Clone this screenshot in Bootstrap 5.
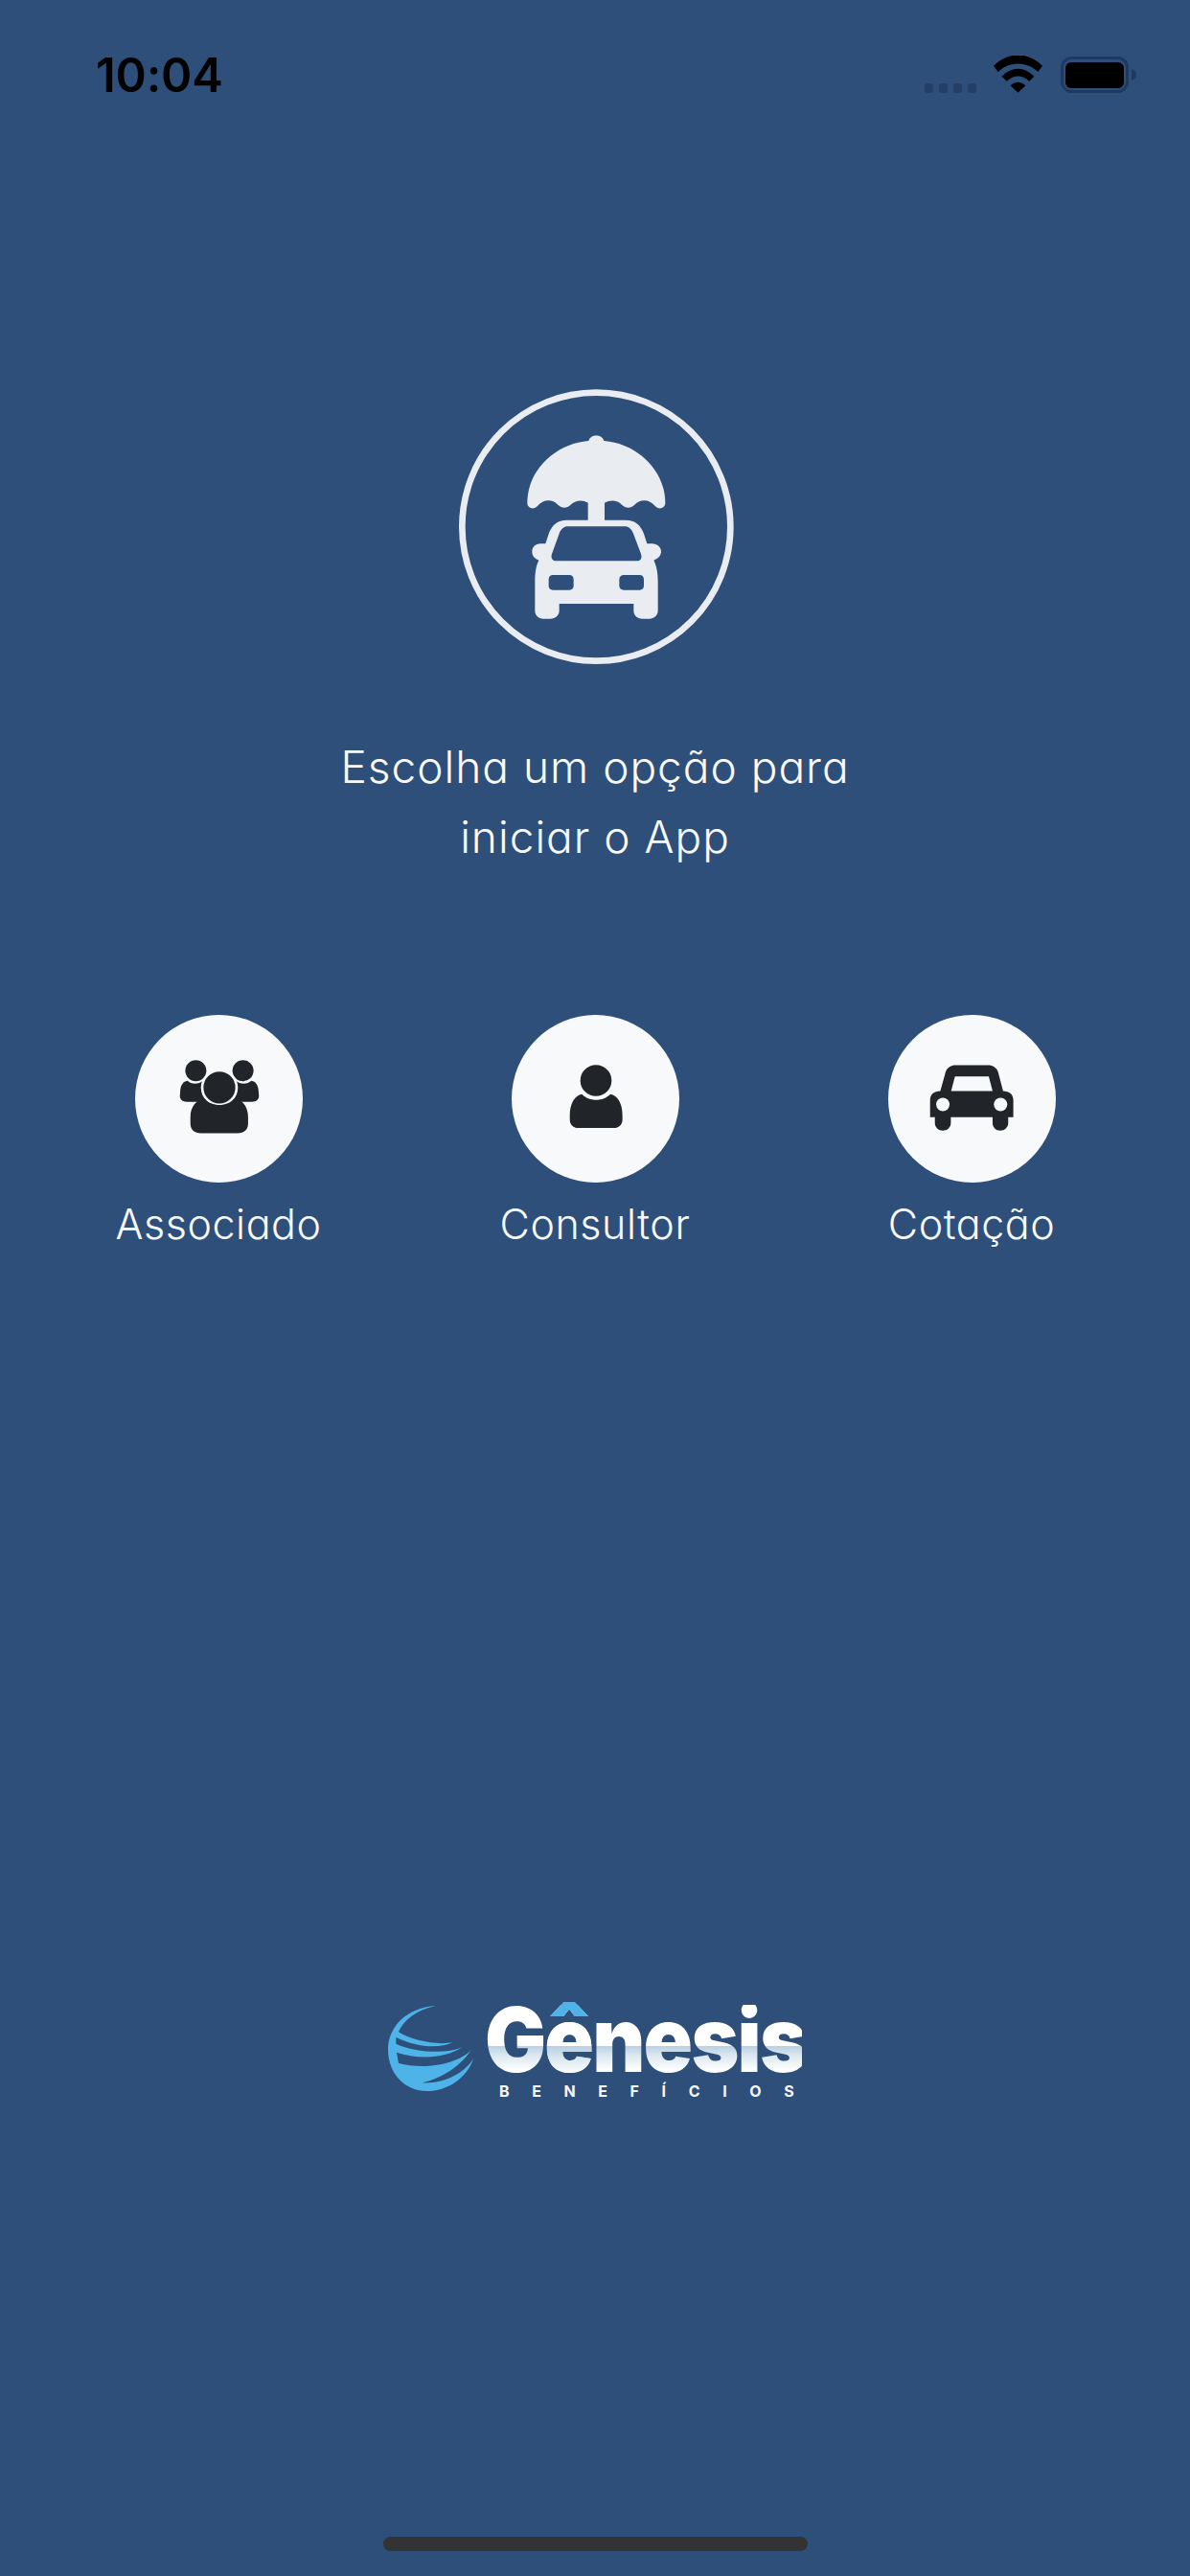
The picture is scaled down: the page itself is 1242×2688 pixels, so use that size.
<!DOCTYPE html>
<html lang="pt-BR">
<head>
<meta charset="utf-8">
<title>Gênesis Benefícios</title>
<link href="https://cdn.jsdelivr.net/npm/bootstrap@5.3.0/dist/css/bootstrap.min.css" rel="stylesheet">
<style>
html,body{height:2688px;overflow:hidden}
body{background:#2e4f7a;font-family:Inter,"Liberation Sans",sans-serif;color:#f8f9fa}
.screen{height:2688px}
.statusbar{height:132px;padding:0 56px 0 100px;padding-top:52px}
.clock{font-size:49px;font-weight:600;color:#000;line-height:54px;letter-spacing:-.2px;width:131px;white-space:nowrap}
.sig-dots{gap:6px;margin-top:35px;margin-right:18px}
.sig-dots i{display:block;width:9px;height:10px;border-radius:3px;background:#243f66}
.wifi-ico{display:block;width:51px;height:39px;margin-right:19px;margin-top:6px}
.batt-ico{display:block;width:79px;height:38px;margin-top:7px}
.hero-ico{display:block;width:320px;height:320px;margin-top:258px}
.intro{font-size:46px;font-weight:300;line-height:73px;letter-spacing:1px;margin-top:54px;margin-bottom:0;font-feature-settings:"cv11" 1;text-align:center}
.choices{padding:149px 31.5px 0}
.round-btn{display:block;width:175px;height:175px;border-radius:50%;background:#f8f9fa;border:0;padding:0}
.round-btn svg{display:block;width:175px;height:175px}
.choice-label{font-size:43px;font-weight:300;line-height:48px;margin-top:19px;letter-spacing:.55px;font-feature-settings:"cv11" 1;white-space:nowrap}
.brand{margin-top:791px;gap:10px;width:434px}
.globe{display:block;width:92px;height:96px;flex:none}
.brand-name{font-size:94px;font-weight:900;line-height:72px;height:72px;width:366px;letter-spacing:-2px;white-space:nowrap;background:linear-gradient(180deg,#fff 0,#fff 59%,#b9d0e2 60%,#d9e6ef 72%,#fff 95%);-webkit-background-clip:text;background-clip:text;color:transparent;transform:scaleX(.905);transform-origin:left center}
.brand-e{background:linear-gradient(180deg,#4db3e8 0,#4db3e8 32%,#fff 33%,#fff 56%,#b9d0e2 56.5%,#d9e6ef 67%,#fff 82%);-webkit-background-clip:text;background-clip:text}
.brand-sub{font-size:16px;font-weight:700;line-height:16px;letter-spacing:23.6px;color:#f4f7fa;padding-left:15px;margin-top:10px;white-space:nowrap}
.home-bar{width:443px;height:15px;border-radius:8px;background:#333;margin-top:auto;margin-bottom:26px}
</style>
</head>
<body>
<main class="screen d-flex flex-column align-items-center">
  <header class="statusbar w-100 d-flex justify-content-between align-items-start">
    <div class="clock">10:04</div>
    <div class="d-flex align-items-start">
      <div class="sig-dots d-flex"><i></i><i></i><i></i><i></i></div>
      <svg class="wifi-ico" viewBox="285 85 153 117"><path fill="#000" d="M285 117C330 72 393 72 438 117L424 136C388 102 335 102 299 136Z"/><path d="M311 150C341 118 382 118 412 150L397 165C373 144 350 144 326 165Z" fill="#000"/><path d="M338 179C352 165 371 165 385 179L361 201Z" fill="#000"/></svg>
      <svg class="batt-ico" viewBox="0 0 79 38"><rect x="1.5" y="1.5" width="68" height="35" rx="10" fill="none" stroke="#1f3a60" stroke-width="3"/><rect x="5" y="6" width="61" height="27" rx="6" fill="#000"/><path d="M74 13c3 1 5 3 5 6s-2 5-5 6z" fill="#1f3a60"/></svg>
    </div>
  </header>

  <svg class="hero-ico" viewBox="0 0 960 960" role="img" aria-label="Carro sob guarda-sol">
    <circle cx="484" cy="479" r="420" fill="none" stroke="#e9ecf1" stroke-width="20"/>
    <g fill="#e9ecf1">
      <path d="M460 210C466 188 502 188 508 210C610 218 700 300 700 405C700 420 680 428 668 414C650 392 622 392 604 410C592 422 576 422 564 410C550 396 530 394 510 404V460H458V404C440 394 420 396 404 410C392 422 376 422 364 410C346 392 318 392 300 414C288 428 268 420 268 405C268 300 358 218 460 210Z"/>
      <path fill-rule="evenodd" d="M392 458H576C606 458 622 474 632 498L643 532H658C676 532 687 544 687 556C687 570 678 578 664 584C672 600 677 620 677 650V742C677 756 665 767 650 767H628C612 767 601 756 601 742V720H368V742C368 756 356 767 340 767H318C303 767 292 756 292 742V650C292 620 296 600 304 584C290 578 283 570 283 556C283 544 292 532 310 532H325L336 498C346 474 362 458 392 458ZM396 478C382 478 374 486 368 500L345 564C341 576 346 586 358 586H612C624 586 628 576 624 564L600 500C594 486 586 478 572 478ZM348 630C340 630 335 636 335 644V664C335 672 340 677 348 677H400C408 677 413 672 413 664V644C413 636 408 630 400 630ZM570 630C562 630 556 636 556 644V664C556 672 562 677 570 677H620C628 677 633 672 633 664V644C633 636 628 630 620 630Z"/>
    </g>
  </svg>

  <p class="intro">Escolha um opção para<br>iniciar o App</p>

  <section class="choices w-100">
    <div class="row g-0">
      <div class="col-4 d-flex flex-column align-items-center">
        <button type="button" class="round-btn" aria-label="Associado">
          <svg viewBox="120 57 525 526">
            <g fill="#212529">
              <circle cx="310" cy="232" r="33"/><circle cx="458" cy="232" r="33"/>
              <path d="M261 298C262 278 270 266 284 264C296 276 320 276 334 262L345 330H282C268 330 260 322 260 312Z"/>
              <path d="M507 298C506 278 498 266 484 264C472 276 448 276 434 262L423 330H486C500 330 508 322 508 312Z"/>
              <circle cx="384" cy="285" r="58" fill="#f8f9fa"/>
              <circle cx="384" cy="285" r="50"/>
              <path d="M293 378C293 345 312 322 338 320C358 346 410 346 430 320C456 322 474 345 474 378V398C474 418 460 428 442 428H325C307 428 293 418 293 398Z"/>
            </g>
          </svg>
        </button>
        <div class="choice-label">Associado</div>
      </div>
      <div class="col-4 d-flex flex-column align-items-center">
        <button type="button" class="round-btn" aria-label="Consultor">
          <svg viewBox="98 57 525 526">
            <g fill="#212529">
              <circle cx="362" cy="263" r="49"/>
              <path d="M280 372C280 335 296 310 318 306C340 330 385 330 407 306C430 310 445 335 445 372V386C445 402 433 412 418 412H307C292 412 280 402 280 386Z"/>
            </g>
          </svg>
        </button>
        <div class="choice-label">Consultor</div>
      </div>
      <div class="col-4 d-flex flex-column align-items-center">
        <button type="button" class="round-btn" aria-label="Cotação">
          <svg viewBox="107 57 525 526">
            <path fill="#212529" d="M238 378V324C238 306 250 297 270 296L287 235C293 222 303 215 318 215H420C435 215 445 222 451 235L467 296C487 297 499 306 499 324V378H483V396C483 410 472 420 458 420C444 420 434 410 434 396V378H303V396C303 410 292 420 278 420C264 420 253 410 253 396V378Z"/>
            <path fill="#f8f9fa" d="M316 250H422L434 296H304Z"/>
            <circle cx="278" cy="338" r="21" fill="#f8f9fa"/><circle cx="459" cy="338" r="21" fill="#f8f9fa"/>
          </svg>
        </button>
        <div class="choice-label">Cotação</div>
      </div>
    </div>
  </section>

  <div class="brand d-flex align-items-start">
    <svg class="globe" viewBox="40 65 276 288" aria-hidden="true">
      <g fill="#4db3e8">
        <path d="M192 68C100 74 43 135 43 205C43 280 96 335 165 335C228 335 290 295 311 232C280 282 215 312 150 309C196 298 260 270 304 206C262 250 160 270 76 248L70 214C140 238 225 232 276 197C225 220 130 215 68 187L68 166C125 196 200 204 245 183C190 192 115 175 76 150C90 115 130 82 192 68Z"/>
      </g>
    </svg>
    <div class="d-flex flex-column">
      <div class="brand-name">G<span class="brand-e">ê</span>nesis</div>
      <div class="brand-sub">BENEFÍCIOS</div>
    </div>
  </div>

  <div class="home-bar"></div>
</main>
<script src="https://cdn.jsdelivr.net/npm/bootstrap@5.3.0/dist/js/bootstrap.bundle.min.js"></script>
</body>
</html>
